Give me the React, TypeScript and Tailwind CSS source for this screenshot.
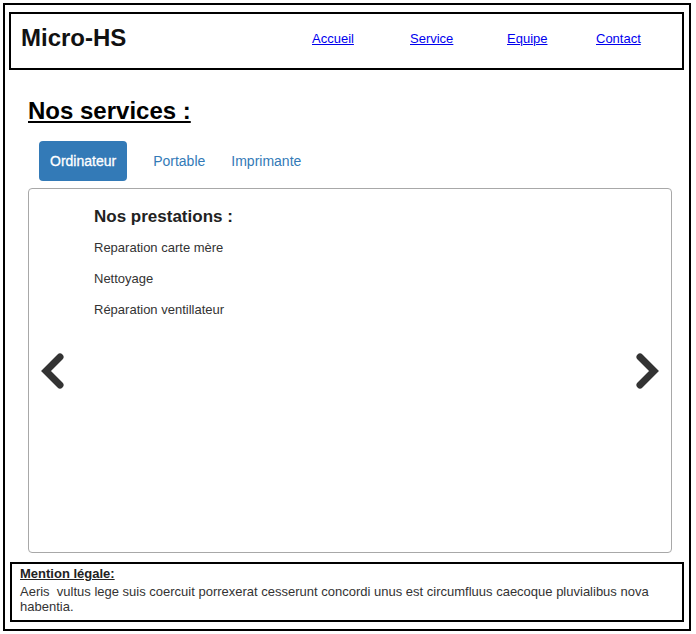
import React from "react";

function Chevron({ dir }: { dir: "left" | "right" }) {
    const d = dir == "left" ? "M20 4 L6 18 L20 32" : "M4 4 L18 18 L4 32";
    return <svg width="24" height="36" viewBox="0 0 24 36" fill="none">
        <path d={d} stroke="#333333" strokeWidth="7" strokeLinecap="round" strokeLinejoin="miter" />
    </svg>
}

export default function App() {
    const prestations = ["Reparation carte mère", "Nettoyage", "Réparation ventillateur"]
    return <div className="font-['Liberation_Sans',Arial,sans-serif] bg-white w-[696px] h-[634px] pt-[3px] pl-[3px]">
        <div className="w-[688px] h-[628px] border-2 border-black flex flex-col">
            <header className="ml-[4px] mt-[7px] w-[675px] h-[58px] border-2 border-black flex flex-row items-start">
                <div className="w-[301px] pl-[10px] pt-[10px]">
                    <h1 className="text-[24px] leading-[28px] font-bold text-[#111]">Micro-HS</h1>
                </div>
                <nav className="flex flex-row pt-[17px] text-[13px] leading-[15px]">
                    <div className="w-[98px]"><a href="#" className="text-[#0000ee] underline">Accueil</a></div>
                    <div className="w-[97px]"><a href="#" className="text-[#0000ee] underline">Service</a></div>
                    <div className="w-[89px]"><a href="#" className="text-[#0000ee] underline">Equipe</a></div>
                    <div><a href="#" className="text-[#0000ee] underline">Contact</a></div>
                </nav>
            </header>

            <section className="pl-[23px]">
                <h2 className="mt-[27px] text-[24px] leading-[28px] font-bold underline text-black">Nos services :</h2>
                <div className="mt-[16px] ml-[11px] flex flex-row items-center gap-[26px] text-[14px] leading-[20px]">
                    <div className="bg-[#337ab7] text-white rounded-[4px] px-[11px] py-[10px] [-webkit-text-stroke:0.3px_white]">Ordinateur</div>
                    <div className="text-[#337ab7]">Portable</div>
                    <div className="text-[#337ab7]">Imprimante</div>
                </div>
                <div className="mt-[7px] w-[644px] h-[365px] border border-[#a8a8a8] rounded-[4px] flex flex-row">
                    <div className="w-[65px] pl-[11px] flex items-center"><Chevron dir="left" /></div>
                    <div className="flex-1 pt-[18px] text-[#333]">
                        <h3 className="text-[17px] leading-[20px] font-bold text-[#222]">Nos prestations :</h3>
                        <ul className="mt-[13px] flex flex-col gap-[16px] text-[13px] leading-[15px]">
                            {prestations.map(p => <li key={p}>{p}</li>)}
                        </ul>
                    </div>
                    <div className="pr-[11px] flex items-center"><Chevron dir="right" /></div>
                </div>
            </section>

            <footer className="ml-[5px] mt-[9px] w-[674px] h-[60px] border-2 border-black px-[8px] pt-[2px]">
                <h4 className="text-[13px] leading-[15px] font-bold underline text-[#222]">Mention légale:</h4>
                <p className="mt-[3px] text-[13px] leading-[15px] text-[#333] whitespace-pre-wrap">{"Aeris  vultus lege suis coercuit porrexerat cesserunt concordi unus est circumfluus caecoque pluvialibus nova habentia."}</p>
            </footer>
        </div>
    </div>
}
